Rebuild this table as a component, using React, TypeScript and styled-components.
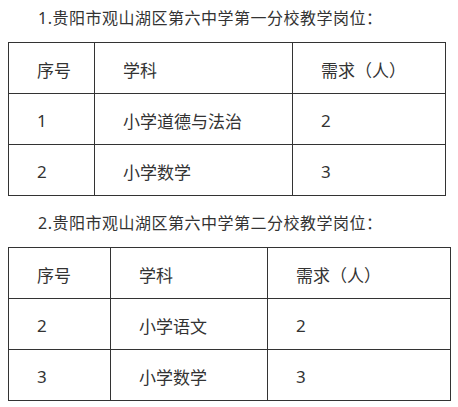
import React from "react";
import styled, { createGlobalStyle } from "styled-components";

type Row = [string, string, string];

const schools: { title: string; cols: number[]; rows: Row[] }[] = [
  {
    title: "1.贵阳市观山湖区第六中学第一分校教学岗位：",
    cols: [86, 198, 153],
    rows: [
      ["序号", "学科", "需求（人）"],
      ["1", "小学道德与法治", "2"],
      ["2", "小学数学", "3"],
    ],
  },
  {
    title: "2.贵阳市观山湖区第六中学第二分校教学岗位：",
    cols: [102, 157, 183],
    rows: [
      ["序号", "学科", "需求（人）"],
      ["2", "小学语文", "2"],
      ["3", "小学数学", "3"],
    ],
  },
];

const App = () => {
  return (
    <Page>
      <GlobalStyle />
      {schools.map((s, i) => (
        <Section key={i} $first={i === 0}>
          <Heading>{s.title}</Heading>
          <Grid $cols={s.cols}>
            {s.rows.map((row) =>
              row.map((text, j) => <Cell key={row[0] + j + text}>{text}</Cell>)
            )}
          </Grid>
        </Section>
      ))}
    </Page>
  );
};

export default App;

const GlobalStyle = createGlobalStyle`
  body {
    margin: 0;
    background: #fff;
  }
`;

const Page = styled.div`
  width: 458px;
  padding: 0 0 0 8px;
  box-sizing: border-box;
  font-family: "Noto Sans", "Noto Sans CJK SC", sans-serif;
  color: #333;
`;

const Section = styled.div<{ $first?: boolean }>`
  padding-top: ${(p) => (p.$first ? "6px" : "15px")};
`;

const Heading = styled.div`
  font-size: 16px;
  line-height: 24px;
  height: 24px;
  padding-left: 30px;
  margin-bottom: 12px;
  letter-spacing: 0.5px;
  white-space: nowrap;
`;

const Grid = styled.div<{ $cols: number[] }>`
  display: grid;
  grid-template-columns: ${(p) => p.$cols.map((c) => `${c}px`).join(" ")};
  grid-auto-rows: 51px;
  width: max-content;
  border-left: 1px solid #333;
  border-top: 1px solid #333;
`;

const Cell = styled.div`
  display: flex;
  align-items: center;
  padding: 2px 0 0 28px;
  box-sizing: border-box;
  border-right: 1px solid #333;
  border-bottom: 1px solid #333;
  font-size: 17px;
  white-space: nowrap;
`;
